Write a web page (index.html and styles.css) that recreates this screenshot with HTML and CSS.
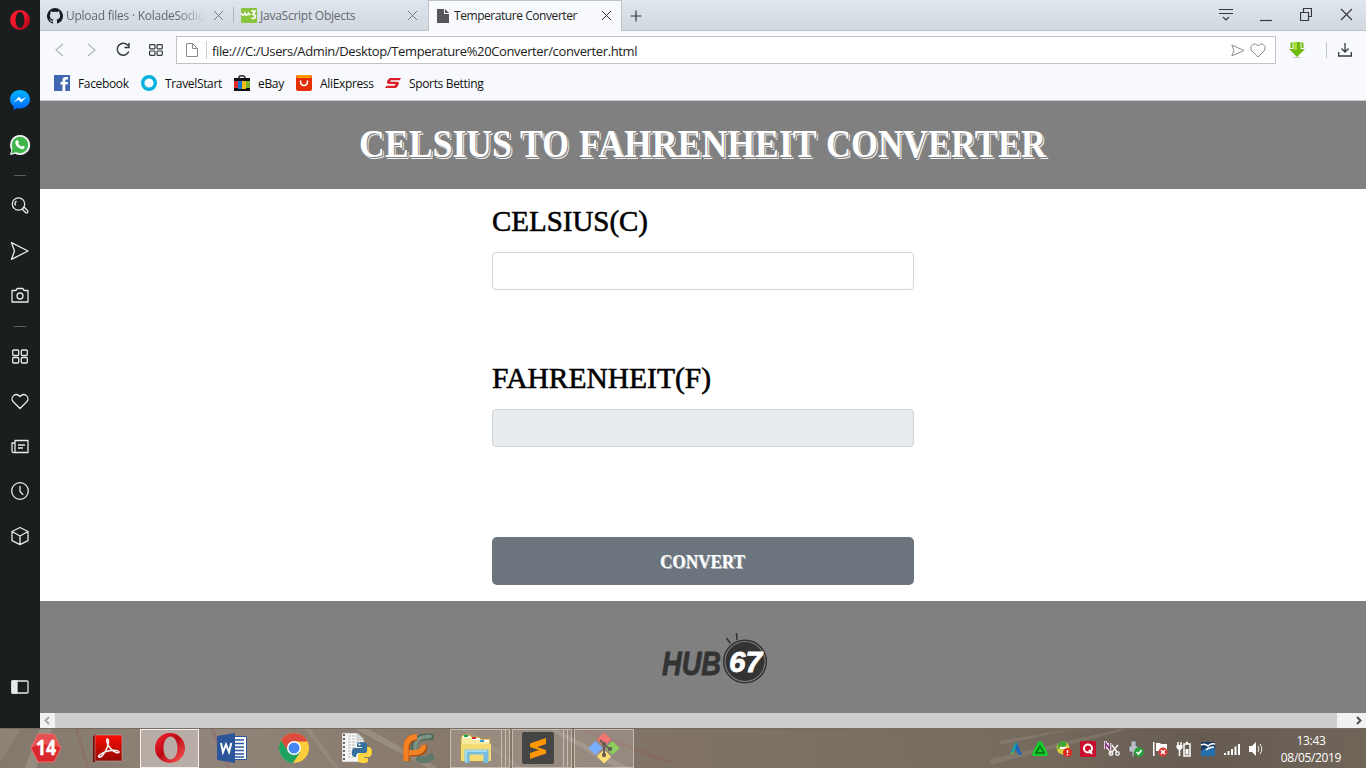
FILE: index.html
```html
<!DOCTYPE html>
<html lang="en">
<head>
<meta charset="utf-8">
<title>Temperature Converter</title>
<link rel="stylesheet" href="styles.css">
</head>
<body>
<div class="window">
  <aside class="sidebar">
    <svg class="side-logo" width="20" height="20" viewBox="0 0 30 30"><defs><linearGradient id="op" x1="0" y1="0" x2="1" y2="1"><stop offset="0" stop-color="#ff1b2d"/><stop offset=".5" stop-color="#e8152a"/><stop offset="1" stop-color="#a70014"/></linearGradient></defs><path fill="url(#op)" fill-rule="evenodd" d="M15 0a15 15 0 1 0 0 30a15 15 0 1 0 0-30zM15 3c4 0 6.500 5.500 6.500 12S19 27 15 27S8.500 21.500 8.500 15S11 3 15 3z"/></svg>
    <svg class="side-msg" width="20" height="20" viewBox="0 0 20 20"><defs><linearGradient id="ms" x1="0" y1="0" x2="0" y2="1"><stop offset="0" stop-color="#00b4ff"/><stop offset="1" stop-color="#0068ff"/></linearGradient></defs><path fill="url(#ms)" d="M10 0C4.400 0 0 4.100 0 9.300c0 3 1.400 5.500 3.700 7.200V20l3.300-1.800c1 .3 2 .4 3 .4c5.600 0 10-4.100 10-9.300S15.600 0 10 0z"/><path fill="#fff" d="M3.500 12.500l5.400-5.700l2.700 2.700l5-2.700l-5.500 5.700L8.500 9.800z"/></svg>
    <svg class="side-wa" width="20" height="20" viewBox="0 0 20 20"><path fill="#f4f4f4" d="M10 0a10 10 0 0 0-8.700 14.900L0 20l5.200-1.300A10 10 0 1 0 10 0z"/><circle cx="10" cy="10" r="8.200" fill="#3fb64c"/><path fill="#3fb64c" d="M2.500 13l-1 5.400l5-1.500z"/><path fill="#fff" d="M6.800 5.200c.5-.3 1-.2 1.300.4l.7 1.600c.2.500-.7 1.200-.5 1.600c.6 1.200 1.600 2.100 2.900 2.700c.5.200 1-1 1.500-.8l1.700.9c.5.300.3 1.300-.2 1.800c-1.300 1.200-3.200.8-5-.3C7 11.800 5.300 9.700 5.300 7.500c0-1 .6-1.800 1.500-2.300z"/></svg>
    <i class="side-rule"></i>
    <svg class="ln side-find" width="20" height="20" viewBox="0 0 20 20"><circle cx="8.500" cy="8" r="6.200"/><path d="M5.500 9.500a3.500 3.500 0 0 1 1-4.500M13 12l1.300-.7l3.200 3.200a1.300 1.300 0 0 1-2 2l-3.200-3.200z"/></svg>
    <svg class="ln side-send" width="20" height="20" viewBox="0 0 20 20"><path d="M1.500 1.700L18 10L1.500 18.300L4.500 10z"/></svg>
    <svg class="ln side-cam" width="20" height="20" viewBox="0 0 20 20"><path d="M2 5.500h3.800l1.500-2h5.400l1.500 2h3.800v11.500h-16z"/><circle cx="10" cy="11" r="3"/></svg>
    <i class="side-rule"></i>
    <svg class="ln side-grid" width="20" height="20" viewBox="0 0 20 20"><rect x="2.700" y="4" width="6" height="5.500" rx="1"/><rect x="11.300" y="4" width="6" height="5.500" rx="1"/><rect x="2.700" y="11.500" width="6" height="5.500" rx="1"/><rect x="11.300" y="11.500" width="6" height="5.500" rx="1"/></svg>
    <svg class="ln side-item" width="20" height="20" viewBox="0 0 20 20"><path d="M10 17.500L3 10.500C-.3 6.500 5.500.500 10 5.500c4.500-5 10.300 1 7 5z"/></svg>
    <svg class="ln side-item" width="20" height="20" viewBox="0 0 20 20"><path d="M5 16.500V4.500h13v12H3.500a1.500 1.500 0 0 1-1.500-1.500V7h3M8 9h7M8 12h5"/></svg>
    <svg class="ln side-item" width="20" height="20" viewBox="0 0 20 20"><circle cx="10" cy="10" r="8.300"/><path d="M10 5v5.500l3.200 3.200"/></svg>
    <svg class="ln side-item" width="20" height="20" viewBox="0 0 20 20"><path d="M10 1.500l8 4v9.200l-8 4l-8-4V5.500zM2 5.500l8 4.500l8-4.500M10 10v8.500"/></svg>
    <svg class="ln side-panel" width="20" height="20" viewBox="0 0 20 20"><rect x="2" y="4" width="16" height="12" rx="1"/><path fill="#e8eaea" d="M2 4h5v12H2z"/></svg>
  </aside>
  <div class="main">
    <div class="tabs">
      <div class="tab tab-one">
        <svg width="16" height="16" viewBox="0 0 16 16"><path fill="#161b20" d="M8 0a8 8 0 0 0-2.500 15.600c.4 0 .5-.2.500-.4v-1.500c-2.200.5-2.700-1-2.700-1c-.4-.9-.9-1.100-.9-1.100c-.7-.5.100-.5.100-.5c.8.100 1.200.8 1.200.8c.7 1.300 1.900.9 2.300.7c.1-.5.300-.9.500-1.100c-1.800-.2-3.600-.9-3.600-4c0-.9.300-1.600.8-2.100c-.1-.3-.4-1.100.1-2.200c0 0 .7-.2 2.200.8a7.500 7.500 0 0 1 4 0c1.500-1 2.200-.8 2.200-.8c.4 1.100.2 1.900.1 2.200c.5.500.8 1.200.8 2.100c0 3.100-1.900 3.800-3.700 4c.3.300.6.800.6 1.500v2.200c0 .2.100.5.500.4A8 8 0 0 0 8 0z"/></svg>
        <span class="tab-title fade">Upload files · KoladeSodiq</span>
        <svg class="x" width="11" height="11" viewBox="0 0 11 11"><path d="M1 1l9 9M10 1l-9 9"/></svg>
      </div>
      <i class="tab-sep"></i>
      <div class="tab tab-two">
        <svg width="16" height="15" viewBox="0 0 16 15"><rect width="16" height="15" rx="1" fill="#8ac33e"/><path d="M.5 5q.8 3.500 2.300 1.500L4 5q.8 3.500 2.300 1.500L7.500 5q.8 3 2 1" fill="none" stroke="#fff" stroke-width="1.400"/><path d="M10 3h4l-2 3.300c3.500.2 2.800 5.200-1.500 4" fill="none" stroke="#fff" stroke-width="1.700"/></svg>
        <span class="tab-title">JavaScript Objects</span>
        <svg class="x" width="11" height="11" viewBox="0 0 11 11"><path d="M1 1l9 9M10 1l-9 9"/></svg>
      </div>
      <div class="tab tab-active">
        <svg width="12" height="14" viewBox="0 0 12 14"><path fill="#555759" d="M0 0h7v5h5v9H0zM8 0l4 4H8z"/></svg>
        <span class="tab-title">Temperature Converter</span>
        <svg class="x" width="11" height="11" viewBox="0 0 11 11"><path d="M1 1l9 9M10 1l-9 9"/></svg>
      </div>
      <svg class="dk plus" width="12" height="12" viewBox="0 0 12 12"><path d="M6 .5v11M.5 6h11"/></svg>
      <div class="wincontrols">
        <span><svg class="dk" width="14" height="14" viewBox="0 0 14 14"><path d="M0 1.500h14M0 5.500h14M4 9l3 3l3-3"/></svg></span>
        <span><svg class="dk" width="12" height="14" viewBox="0 0 12 14"><path d="M0 12.500h12"/></svg></span>
        <span><svg class="dk" width="12" height="13" viewBox="0 0 12 13"><path d="M.5 4.500h8v8h-8zM3.500 4.500v-4h8v8h-3"/></svg></span>
        <span><svg class="dk" width="13" height="13" viewBox="0 0 13 13"><path d="M1 1l11 11M12 1L1 12"/></svg></span>
      </div>
    </div>
    <div class="toolbar">
      <svg class="nav back" width="9" height="14" viewBox="0 0 9 14"><path d="M8 1L1 7l7 6"/></svg>
      <svg class="nav fwd" width="9" height="14" viewBox="0 0 9 14"><path d="M1 1l7 6l-7 6"/></svg>
      <svg class="dk reload" width="15" height="15" viewBox="0 0 15 15"><path stroke-width="1.500" d="M12.800 9.500A6 6 0 1 1 12 3.500M13 1v4.500H8.500"/></svg>
      <svg class="dk" width="14" height="12" viewBox="0 0 14 12"><rect x=".6" y=".6" width="5.300" height="4.300" rx=".8"/><rect x="8" y=".6" width="5.300" height="4.300" rx=".8"/><rect x=".6" y="7" width="5.300" height="4.300" rx=".8"/><rect x="8" y="7" width="5.300" height="4.300" rx=".8"/></svg>
      <div class="address">
        <svg class="gy" width="12" height="14" viewBox="0 0 12 14"><path d="M.5.500h6l5 5v8H.5zM6.500.500v5h5"/></svg>
        <i class="addr-sep"></i>
        <span class="url">file:///C:/Users/Admin/Desktop/Temperature%20Converter/converter.html</span>
        <svg class="gy" width="14" height="13" viewBox="0 0 14 13"><path d="M.8 1L13 6.500L.8 12L3 6.500z"/></svg>
        <svg class="gy" width="16" height="15" viewBox="0 0 16 15"><path d="M8 14L2 8C-1.500 3.500 4-2 8 3c4-5 9.500.5 6 5z"/></svg>
      </div>
      <svg class="green" width="16" height="16" viewBox="0 0 16 16"><ellipse cx="8" cy="15.300" rx="5" ry=".6" fill="#ccc"/><path fill="#70b90d" d="M4.500 0h7v7H16l-8 8l-8-8h4.500zM1.500 1l2-1v6H1.500zM12.500 0l2 1v5h-2z"/><path fill="#a7df35" d="M5 0h3v8H5z"/></svg>
      <i class="tool-sep"></i>
      <svg class="dk" width="14" height="14" viewBox="0 0 14 14"><path stroke-width="1.300" d="M7 0v9M3.500 5.500L7 9l3.500-3.500M.7 9v4h12.600V9"/></svg>
    </div>
    <div class="bookmarks">
      <a class="bm bm-fb"><svg width="16" height="16" viewBox="0 0 16 16"><path fill="#4267b2" d="M0 0h16v16H0z"/><path fill="#fff" d="M8.500 16V9.500h-2V7h2V5.300c0-2 1.200-3.200 3.200-3.200H14v2.300h-1.400c-1 0-1.300.4-1.300 1.200V7H14l-.3 2.500h-2.400V16z"/></svg><span>Facebook</span></a>
      <a class="bm bm-ts"><svg width="16" height="16" viewBox="0 0 16 16"><circle cx="8" cy="8" r="6.300" fill="none" stroke="#00b1dc" stroke-width="3.400"/></svg><span>TravelStart</span></a>
      <a class="bm bm-eb"><svg width="16" height="16" viewBox="0 0 16 16"><path d="M5 4V2.500Q5 .7 8 .7t3 1.800V4" fill="none" stroke="#222" stroke-width="1.400"/><path fill="#111" d="M0 3h16v13H0z"/><path fill="#e22b30" d="M0 6h4v7H0z"/><path fill="#1773d2" d="M4 6h4v8H4z"/><path fill="#f5bd13" d="M8 6h4v8H8z"/><path fill="#78b72b" d="M12 6h4v7h-4z"/></svg><span>eBay</span></a>
      <a class="bm bm-al"><svg width="16" height="16" viewBox="0 0 16 16"><rect width="16" height="16" rx="2" fill="#e62e04"/><path fill="#ff9800" d="M2 0h12l2 3H0z"/><path d="M4.500 6q0 4.500 3.500 4.500T11.500 6" fill="none" stroke="#fff" stroke-width="1.600" stroke-linecap="round"/></svg><span>AliExpress</span></a>
      <a class="bm bm-sp"><svg width="16" height="10" viewBox="0 0 16 10"><path fill="#d9202b" d="M5 0h11l-1.200 2.200H6.500q-1 0-1.200.8t.7.800h6q2.300 0 1.800 2.200t-2.800 4H0l1.500-2.300h7.500q1 0 1.200-.8t-.7-.8H4Q1.500 6 2 3.600T5 0z"/></svg><span>Sports Betting</span></a>
    </div>
    <div class="page">
      <header class="hero"><h1><svg class="display display-white" width="690" height="50" viewBox="0 0 690 50"><text class="title-text" y="37"><tspan x="-1" textLength="153" lengthAdjust="spacingAndGlyphs">CELSIUS</tspan> <tspan x="160" textLength="49" lengthAdjust="spacingAndGlyphs">TO</tspan> <tspan x="219" textLength="237" lengthAdjust="spacingAndGlyphs">FAHRENHEIT</tspan> <tspan x="466" textLength="220" lengthAdjust="spacingAndGlyphs">CONVERTER</tspan></text></svg></h1></header>
      <main class="form">
        <label class="field-label"><svg class="display display-black" width="250" height="40" viewBox="0 0 250 40"><text class="label-text" x="0" y="30" textLength="156" lengthAdjust="spacingAndGlyphs">CELSIUS(C)</text></svg></label>
        <input class="field" type="text">
        <label class="field-label second"><svg class="display display-black" width="250" height="40" viewBox="0 0 250 40"><text class="label-text" x="0" y="30" textLength="219" lengthAdjust="spacingAndGlyphs">FAHRENHEIT(F)</text></svg></label>
        <input class="field" type="text" disabled>
        <button class="convert"><svg class="display display-white" width="86" height="26" viewBox="0 0 86 26"><text class="button-text" x="0" y="20" textLength="85" lengthAdjust="spacingAndGlyphs">CONVERT</text></svg></button>
      </main>
      <footer class="foot">
        <svg width="108" height="54" viewBox="0 0 108 54"><text class="hub" x="1" y="42" textLength="59" lengthAdjust="spacingAndGlyphs">HUB</text><circle cx="84" cy="28.500" r="21.300" fill="none" stroke="#333" stroke-width="1.500"/><circle cx="84" cy="28.500" r="19.500" fill="#333"/><path d="M65.500 5l4 5.500M75.500 0l.5 7" stroke="#333" stroke-width="1.500"/><text class="hub-num" x="68" y="39" textLength="33" lengthAdjust="spacingAndGlyphs">67</text></svg>
      </footer>
    </div>
    <div class="scroll"><svg class="arrow" width="15" height="15" viewBox="0 0 15 15"><path d="M9 4L5.500 7.500L9 11" stroke="#a9a9a9"/></svg><i class="thumb"></i><svg class="arrow" width="15" height="15" viewBox="0 0 15 15"><path d="M6 4l3.500 3.500L6 11" stroke="#505050"/></svg></div>
  </div>
</div>
<div class="taskbar">
  <svg class="streaks" width="1366" height="40" viewBox="0 0 1366 40" preserveAspectRatio="none"><path d="M40 0L24 40H36L52 0zM355 0l75 40h10L368 0zM548 0l70 40h14L556 0z" fill="#c9c4b8" opacity=".25"/><path d="M0 0h20L0 34zM305 0l30 40h4L311 0zM460 0l60 40h4L468 0zM990 30L1120 0h9L990 36zM1000 12l70-12h4l-74 16z" fill="#c9c4b8" opacity=".15"/><path d="M583 0l90 32l-5 2L575 0zM75 0l12 40h3L78 0zM210 0l18 40h3L214 0z" fill="#a03a45" opacity=".16"/></svg>
  <div class="tasks">
    <div class="task"><svg width="32" height="30" viewBox="0 0 32 30"><path fill="#d9282d" stroke="#ef6c6c" d="M8 1h16l7 14l-7 14H8L1 15z"/><path fill="#ec6b68" opacity=".6" d="M8 1h16l7 14Q15 8 1 15z"/><text class="fourteen" x="6" y="22" textLength="20" lengthAdjust="spacingAndGlyphs">14</text></svg></div>
    <div class="task"><svg width="30" height="29" viewBox="0 0 30 29"><defs><linearGradient id="ad" x1="0" y1="0" x2="0" y2="1"><stop stop-color="#fb0d07"/><stop offset="1" stop-color="#960800"/></linearGradient></defs><path fill="#770600" d="M0 2l3-2v26l-1 2H0z"/><path fill="url(#ad)" stroke="#b9aaa4" stroke-width=".6" d="M2 1h27v26H2z"/><path d="M14 5c3 0 1 7-1 11s-5 8-7 7s4-5 9-6s11-1 11 1s-6 0-9-4s-4-8-3-9z" fill="none" stroke="#fff" stroke-width="1.500"/></svg></div>
    <div class="task selected"><svg width="30" height="30" viewBox="0 0 30 30"><defs><linearGradient id="op2" x1="0" y1="0" x2="1" y2="1"><stop stop-color="#ff2834"/><stop offset=".45" stop-color="#b90913"/><stop offset="1" stop-color="#ff5b58"/></linearGradient></defs><path fill="url(#op2)" fill-rule="evenodd" d="M15 0a15 15 0 1 0 0 30a15 15 0 1 0 0-30zM15.500 3.500c4 0 7 5 7 11.500s-3 11.500-7 11.500s-7-5-7-11.500s3-11.500 7-11.500z"/></svg></div>
    <div class="task"><svg width="30" height="30" viewBox="0 0 30 30"><path fill="#fff" stroke="#2b579a" d="M15 3.500h14.500v23H15z"/><path stroke="#2b579a" stroke-width="1.500" d="M18 7h9M18 10.500h9M18 14h9M18 17.500h9M18 21h9M18 24h9"/><path fill="#2b579a" d="M0 3l18-3v30L0 27z"/><path d="M4 10l2 9L9 11.500l3 7.500l2.300-9" fill="none" stroke="#fff" stroke-width="2"/></svg></div>
    <div class="task"><svg width="30" height="30" viewBox="0 0 30 30"><circle cx="15" cy="15" r="15" fill="#fbcd3b"/><path fill="#dd4b3e" d="M2 7.500A15 15 0 0 1 28.500 8.500H15L8.600 18z"/><path fill="#1da261" d="M2 7.500A15 15 0 0 0 14 30l7.200-11L9 18z"/><circle cx="15" cy="15" r="7" fill="#fff"/><circle cx="15" cy="15" r="5.500" fill="#4688f1"/></svg></div>
    <div class="task"><svg width="32" height="32" viewBox="0 0 32 32"><path fill="#f5f5f3" stroke="#888" stroke-width=".5" d="M2 1h16l6 6v23H2z"/><path stroke="#666" stroke-dasharray="2 2" stroke-width="2" d="M4 2v27"/><path fill="#ddd" stroke="#999" stroke-width=".5" d="M17 1v7h7z"/><path stroke="#bbb" stroke-dasharray="3 1" d="M8 4h7M8 7h7M8 10h13M8 13h8M8 16h6M8 19h4M8 22h4M8 25h5"/><path fill="#376f9f" d="M17 12q0-2 5-2t5 3v6q0 2-3 2h-5q-3 0-3 4h-2q-3-2-2-6t4-3h6v-1h-5z"/><path fill="#ffd43e" d="M27 15h2q3 1 3 5t-3 5h-6v1h5v3q0 2-5 2t-5-3v-4q0-3 3-3h4q3 0 2-6z"/><circle cx="19.500" cy="12.500" r="1" fill="#fff"/></svg></div>
    <div class="task"><svg width="32" height="31" viewBox="0 0 32 31"><path d="M12 16C12 6 18 3 29 4" fill="none" stroke="#50695c" stroke-width="6.500" stroke-linecap="round"/><path d="M13 16C13 7 18 3 28 3.500" fill="none" stroke="#7c9586" stroke-width="3.500" stroke-linecap="round"/><path d="M29 24C26 27 22 28 17 26" fill="none" stroke="#5f786a" stroke-width="6.500" stroke-linecap="round"/><path d="M4.500 28V15Q4.500 5 15 4M7 20Q23 22 22 12" fill="none" stroke="#a94800" stroke-width="6.500"/><path d="M4 28V15Q4 4.500 15 3.500M7 19.500Q22 21 21.500 12" fill="none" stroke="#f28224" stroke-width="5.300"/></svg></div>
    <div class="task stack"><div class="open"><svg width="32" height="31" viewBox="0 0 32 31"><path fill="#f8e99d" stroke="#b79b42" d="M1 4l2-2h7l2 2h7l2 2h9v22H1z"/><path fill="#fff" d="M3 3h7v2H3zM12 5h8v2h-8zM20 7h9v2h-9z"/><path stroke-width="2" stroke="#16a943" d="M4 3h4"/><path stroke-width="2" stroke="#d03030" d="M12 5h4"/><path stroke-width="2" stroke="#3299df" d="M20 8h4"/><path fill="#f4dc75" d="M1 11h30v17H1z"/><path d="M7 30V19h19v11" fill="none" stroke="#75bddf" stroke-width="5"/><path d="M6 29V18h21" fill="none" stroke="#b5e5f5" stroke-width="1.500"/></svg></div><i></i><i></i></div>
    <div class="task stack"><div class="open"><svg width="32" height="32" viewBox="0 0 32 32"><rect width="32" height="32" rx="2" fill="#454545"/><path fill="#ff9800" d="M8 11.500L24 6v6l-9 3l9 3v3.500L8 27v-6l9-3l-9-3z"/></svg></div><i></i><i></i></div>
    <div class="task open-single"><svg width="32" height="32" viewBox="0 0 32 32"><g transform="rotate(45 16 16)"><path fill="#f47373" d="M5 5h10v10H5z"/><path fill="#8bd05f" d="M17 5h10v10H17z"/><path fill="#7aadff" d="M5 17h10v10H5z"/><path fill="#fbe173" d="M17 17h10v10H17z"/></g><path d="M12 8l4 4v11M16 13l6 4" stroke="#665e56" stroke-width="2" fill="none"/><circle cx="16" cy="12" r="2.200" fill="#665e56"/><circle cx="22" cy="17" r="2.200" fill="#665e56"/><circle cx="16" cy="23" r="2.200" fill="#665e56"/></svg></div>
  </div>
  <div class="tray">
    <svg viewBox="0 0 16 16"><path fill="#17a1a7" d="M2 13L7 2h3L5 13z"/><path fill="#1a66c1" d="M9 2l5 12h-3L7 8z"/><path fill="#94a72c" d="M2 13l5-3l-2 3z"/></svg>
    <svg viewBox="0 0 16 16"><path fill="#12ce25" d="M8 0l2 1l6 12l-1 2H1l-1-2L6 1z"/><path fill="none" stroke="#076a16" stroke-width="1.500" d="M8 5l4 7H4z"/></svg>
    <svg viewBox="0 0 16 16"><circle cx="7" cy="7" r="6.500" fill="#d6ce45"/><path fill="#41a63a" d="M2 3q5-6 9 0l-3 4l-3-2l-4 4z"/><path fill="#fff" d="M4 6h7v2H4z"/><circle cx="11.500" cy="11.500" r="4.500" fill="#e2261c"/><path stroke="#fff" stroke-width="1.500" d="M11.500 9v3M11.500 13v1.500"/></svg>
    <svg viewBox="0 0 16 16"><rect width="16" height="16" rx="1" fill="#c8102e"/><circle cx="8" cy="7.500" r="4" fill="none" stroke="#fff" stroke-width="2"/><path stroke="#fff" stroke-width="2" d="M9 9l3 4"/></svg>
    <svg viewBox="0 0 16 16"><path d="M1.500 8V2l4 6V2" stroke="#fff" stroke-width="3.500" fill="none"/><path d="M1.500 8V2l4 6V2" stroke="#80397b" stroke-width="1.500" fill="none"/><path d="M8 4l5 7M14 4l-6 7" stroke="#eee" stroke-width="1.500"/><circle cx="7" cy="12.500" r="1.700" fill="none" stroke="#eee" stroke-width="1.500"/><circle cx="13.500" cy="12.500" r="1.700" fill="none" stroke="#eee" stroke-width="1.500"/></svg>
    <svg viewBox="0 0 16 16"><path fill="#b9bfc4" stroke="#555" stroke-width=".7" d="M3 0h5v5h2v6H6v5H4v-5H1V5h2z"/><circle cx="11" cy="11" r="4.800" fill="#2aa13a"/><path stroke="#fff" stroke-width="1.500" fill="none" d="M8.500 11l2 2l3-4"/></svg>
    <svg viewBox="0 0 16 16"><path fill="#fff" d="M1 1h1.500v14H1zM4 2h4l1 1h6v7H4z"/><circle cx="11" cy="11" r="4.500" fill="#d83a35"/><path stroke="#fff" stroke-width="1.500" d="M9 9l4 4M13 9l-4 4"/></svg>
    <svg viewBox="0 0 16 16"><path fill="none" stroke="#fff" stroke-width="1.500" d="M8 3h6v12H8zM10 1.500h2M2 1v4M5 1v4M3.500 8v7"/><path fill="#fff" d="M.500 4h6v3l-2 2h-2l-2-2zM9.500 8h3v5.500h-3z"/></svg>
    <svg viewBox="0 0 16 16"><rect x="1" y="1" width="14" height="14" rx="1" fill="#2470ad"/><path fill="#173a65" d="M1 1h14v6Q6 5 1 10z"/><path stroke="#fff" stroke-width="1.500" fill="none" d="M1 4q4-2 7 1q3-3 7-2M6 9q3-3 8-3"/></svg>
    <svg viewBox="0 0 16 16"><path fill="#fff" d="M0 12h2v2H0zM3.500 10h2v4h-2zM7 8h2v6H7zM10.500 5.500h2V14h-2zM14 3h2v11h-2z"/></svg>
    <svg viewBox="0 0 16 16"><path fill="#fff" d="M1 5h3l4-4v14l-4-4H1z"/><path stroke="#eee" fill="none" d="M10 5q2 3 0 6M12 3q3.500 5 0 10"/></svg>
  </div>
  <div class="clock"><span>13:43</span><span>08/05/2019</span></div>
</div>
</body>
</html>
```
FILE: styles.css
```css
* { box-sizing: border-box; }
body { margin: 0; width: 1366px; height: 768px; overflow: hidden; font-family: "Open Sans", "Noto Sans", sans-serif; font-size: 12px; letter-spacing: -0.34px; color: #111; }
svg { display: block; flex: none; }
.window { display: flex; height: 728px; }
.sidebar { width: 40px; background: #1a1e1f; display: flex; flex-direction: column; align-items: center; padding-top: 10px; }
.side-msg { margin-top: 60px; }
.side-wa { margin-top: 25px; }
.side-rule { width: 12px; height: 1px; background: #5d6263; margin-top: 20px; }
.ln { fill: none; stroke: #e8eaea; stroke-width: 1.3; stroke-linejoin: round; margin-right: 1px; }
.side-find { margin-top: 20px; }
.side-send { margin-top: 25px; }
.side-cam { margin-top: 24px; }
.sidebar .side-rule + .side-grid { margin-top: 19px; }
.side-cam + .side-rule { margin-top: 21px; }
.side-item { margin-top: 25px; }
.side-panel { margin-top: auto; margin-bottom: 31px; }
.main { flex: 1; min-width: 0; display: flex; flex-direction: column; }
.tabs { height: 31px; display: flex; background: linear-gradient(#e0e6ee, #d1d7df); box-shadow: inset 0 -1px #c0c4c9; }
.tab { display: flex; align-items: center; height: 31px; color: #65696e; }
.tab svg { stroke-width: 1; }
.x { fill: none; stroke: #777c82; margin-left: auto; }
.tab-one { width: 193px; padding: 0 9px 0 7px; }
.tab-one .tab-title { margin-left: 3px; width: 139px; overflow: hidden; white-space: nowrap; letter-spacing: -0.25px; }
.fade { -webkit-mask-image: linear-gradient(90deg, #000 80%, transparent); mask-image: linear-gradient(90deg, #000 80%, transparent); }
.tab-sep { width: 1px; height: 16px; margin-top: 7px; background: #b0b5bb; }
.tab-two { width: 194px; padding: 0 10px 0 7px; }
.tab-two .tab-title { margin-left: 3px; letter-spacing: -0.25px; }
.tab-active { width: 194px; background: #f7f9fc; border: 1px solid #c0c4c9; border-bottom: 0; padding: 0 9px 1px 8px; color: #222; }
.tab-active .tab-title { margin-left: 5px; letter-spacing: -0.44px; }
.tab-active .x { stroke: #333; }
.dk { fill: none; stroke: #36393d; stroke-width: 1.2; }
.plus { margin: 10px 0 0 8px; }
.wincontrols { margin-left: auto; padding-top: 8px; display: flex; }
.wincontrols span { width: 40px; display: flex; justify-content: center; align-items: flex-start; }
.toolbar { height: 37px; background: #f7f9fc; display: flex; align-items: center; padding-left: 15px; }
.nav { fill: none; stroke: #b5b8bc; stroke-width: 1.3; }
.fwd { margin-left: 23px; }
.reload { margin: 0 18px 0 20px; }
.address { margin-left: 13px; width: 1100px; height: 28px; margin-top: 1px; border: 1px solid #c0c4c8; background: #fff; display: flex; align-items: center; padding: 0 9px; }
.gy { fill: none; stroke: #888b8f; }
.addr-sep { width: 1px; height: 18px; background: #ccc; margin: 0 5px 0 8px; }
.url { flex: 1; color: #222; font-size: 13px; letter-spacing: -0.37px; padding-top: 1px; }
.address .gy + .gy { margin-left: 5px; }
.green { margin-left: 13px; }
.tool-sep { width: 1px; height: 16px; margin: 0 11px 0 21px; background: #c0c3c7; }
.bookmarks { height: 33px; background: #f7f9fc; border-bottom: 1px solid #c8cbce; display: flex; padding: 0 0 2px 14px; }
.bm { display: flex; align-items: center; gap: 8px; }
.bm span { padding-top: 1px; }
.bm-fb { width: 87px; }
.bm-ts { width: 93px; }
.bm-eb { width: 62px; }
.bm-al { width: 89px; }
.page { height: 612px; background: #fff; }
.hero { height: 88px; background: #808080; padding: 19px 0 0 320px; }
h1 { margin: 0; }
.display { font-family: "Liberation Serif", serif; letter-spacing: 0; overflow: visible; }
.display-white { fill: #fff; }
.display-black { fill: #000; }
.title-text { font-size: 40px; font-weight: 700; text-shadow: 1px 1px #808080, 2px 2px #eee; }
.label-text { font-size: 30px; font-weight: 400; stroke: #000; stroke-width: .6; }
.form { height: 412px; width: 422px; margin-left: 452px; padding-top: 12px; }
.field-label { display: block; height: 51px; }
.second { margin-top: 68px; }
.field { display: block; width: 422px; height: 38px; border: 1px solid #ced4da; border-radius: 4px; background: #fff; }
.field:disabled { background: #e9ecef; }
.convert { display: flex; align-items: center; justify-content: center; width: 422px; height: 48px; margin-top: 90px; border: 0; border-radius: 5px; background: #6c757d; }
.button-text { font-size: 19px; font-weight: 700; text-shadow: 1px 1px #b8bdc1; }
.foot { height: 112px; background: #808080; padding: 32px 0 0 621px; }
.hub { font: italic 700 33px "Liberation Sans", sans-serif; letter-spacing: 0; fill: #333; stroke: #333; stroke-width: .8; }
.hub-num { font: italic 700 30px "Liberation Sans", sans-serif; letter-spacing: 0; fill: #fff; stroke: #fff; stroke-width: .8; }
.scroll { height: 15px; display: flex; background: #f1f1f1; justify-content: space-between; }
.arrow { fill: none; stroke-width: 2; }
.thumb { flex: 1; background: #cdcdcd; margin-right: 14px; }
.taskbar { height: 40px; position: relative; display: flex; background: linear-gradient(90deg, #82786b, #91847a 15%, #857768 35%, #807267 50%, #776b5f 75%, #655b50 88%, #6f6559); border-top: 1px solid #756c61; }
.streaks { position: absolute; inset: 0; }
.tasks, .tray, .clock { position: relative; }
.tasks { display: flex; padding-left: 15px; }
.task { width: 62px; height: 39px; display: flex; align-items: center; justify-content: center; padding-bottom: 1px; }
.selected { width: 59px; margin: 0 2px 0 1px; border: 1px solid #f3f0ed; background: rgba(215,205,200,.58); }
.stack { padding: 0 0 0 1px; justify-content: flex-start; }
.open { width: 52px; height: 39px; display: flex; align-items: center; justify-content: center; padding-bottom: 1px; }
.open, .open-single, .stack i { border: 1px solid rgba(220,214,205,.65); background: rgba(205,195,185,.28); }
.stack i { width: 4px; height: 39px; border-left: 0; }
.open-single { width: 60px; margin: 0 1px; }
.fourteen { font: 700 21px "Open Sans", sans-serif; letter-spacing: 0; fill: #fff; stroke: #fff; stroke-width: .5; }
.tray { margin-left: auto; display: flex; align-items: center; gap: 8px; padding-top: 1px; }
.tray svg { width: 16px; height: 16px; }
.clock { width: 102px; display: flex; flex-direction: column; align-items: center; padding: 3px 8px 0 0; color: #fff; line-height: 17px; }
```
